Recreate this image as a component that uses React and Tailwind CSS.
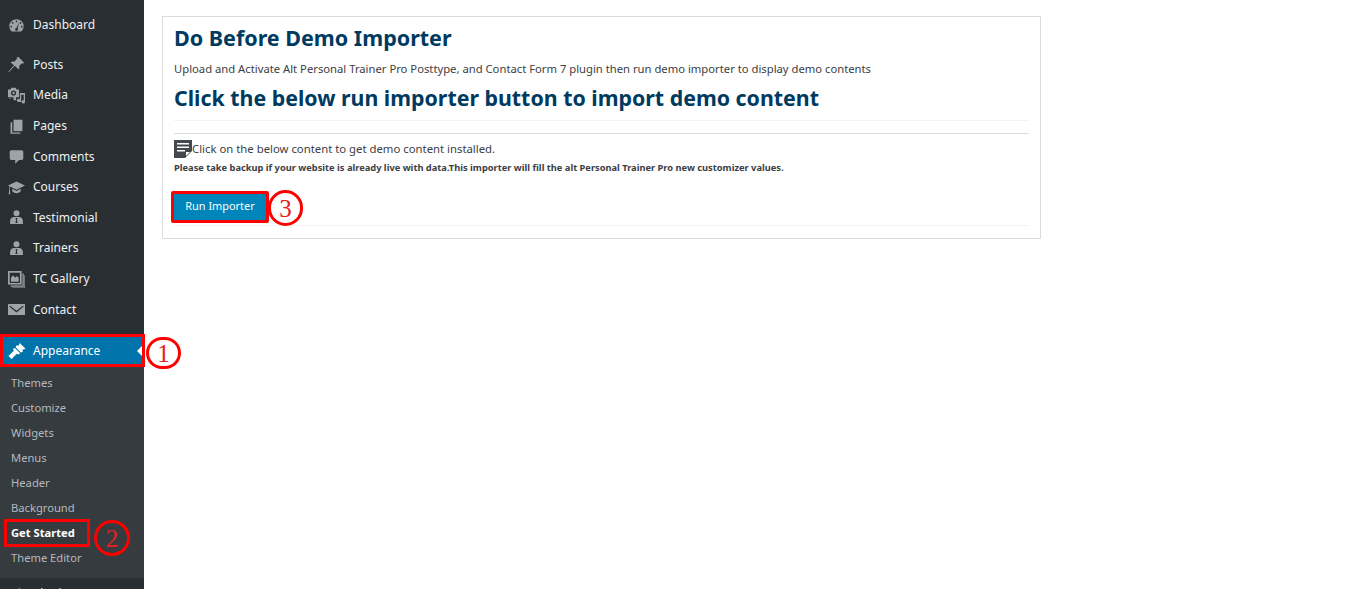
import React from 'react';

const iconClass = 'w-[17px] h-[17px]';

const Gauge = () => (
  <svg viewBox="0 0 20 20" className={iconClass} fill="currentColor">
    <path fillRule="evenodd" d="M10 2.500a8.500 8.500 0 0 0-8.500 8.500c0 2.400 1 4.500 2.700 6h11.600a8.500 8.500 0 0 0 2.700-6 8.500 8.500 0 0 0-8.500-8.500zM10 4.200a1 1 0 1 1 0 2 1 1 0 0 1 0-2zM5.400 6a1 1 0 1 1 0 2 1 1 0 0 1 0-2zM14.600 6a1 1 0 1 1 0 2 1 1 0 0 1 0-2zM3.700 10.400a1 1 0 1 1 0 2 1 1 0 0 1 0-2zM16.300 10.400a1 1 0 1 1 0 2 1 1 0 0 1 0-2zM12.800 6.800l-2.900 6a1.700 1.700 0 1 0 1.500.6z" />
  </svg>
);
const Pin = () => (
  <svg viewBox="0 0 20 20" className={iconClass} fill="currentColor">
    <path d="M12 1l7 7-1.400 1-1-.6-3.400 3.200c.5 1.600.2 3-.7 4.400L8 11.500 1 19l-.5-.5L7 11 3 7.400c1.300-.9 2.800-1.200 4.400-.7l3.200-3.400-.6-1z" />
  </svg>
);
const MediaIcon = () => (
  <svg viewBox="0 0 20 20" className={iconClass} fill="currentColor">
    <path fillRule="evenodd" d="M0 3h3l1-2h5l1 2h3v9H9.500v3.500H6.500V12H0zM6.500 4a3 3 0 1 0 0 6 3 3 0 0 0 0-6z" />
    <circle cx="6.500" cy="7" r="1.400" />
    <path d="M14 7h6v10.500a2 2 0 1 1-1.500-1.900V9h-3v8.500H12a1.800 1.800 0 1 1 2-2zM1 13h3a2.200 2.200 0 0 1-3 0z" />
  </svg>
);
const PagesIcon = () => (
  <svg viewBox="0 0 20 20" className={iconClass} fill="currentColor">
    <path d="M6.500 2H17v13.500H6.500z" />
    <path d="M5 5v12h9.500v1.500H3V5z" />
  </svg>
);
const Bubble = () => (
  <svg viewBox="0 0 20 20" className={iconClass} fill="currentColor">
    <path d="M4 2.500h12a2 2 0 0 1 2 2v7.500a2 2 0 0 1-2 2h-3l-4.500 4.500V14H4a2 2 0 0 1-2-2V4.500a2 2 0 0 1 2-2z" />
  </svg>
);
const Cap = () => (
  <svg viewBox="0 0 20 20" className={iconClass} fill="currentColor">
    <path d="M10 3L0 7.500l1.500.8V13l-.8 5h2L2.300 13V8.800l7.700 3.700 10-5z" />
    <path d="M5 11.500v3c1.300 1.500 3 2.200 5 2.200s3.700-.7 5-2.200v-3l-5 2.500z" />
  </svg>
);
const Person = () => (
  <svg viewBox="0 0 20 20" className={iconClass} fill="currentColor">
    <circle cx="10" cy="5" r="3.500" />
    <path fillRule="evenodd" d="M6.500 9.500h7c2.400.5 4 2 4 4.500v3.500h-15V14c0-2.500 1.600-4 4-4.500zM9.300 10.500l-.5 1 .7 1-.7 4h2.400l-.7-4 .7-1-.5-1z" />
  </svg>
);
const GalleryIcon = () => (
  <svg viewBox="0 0 20 20" className={iconClass} fill="currentColor">
    <path fillRule="evenodd" d="M0 0h16v16H0zM2 2v12h12V2z" />
    <path d="M3.500 12.500V8l2.500-3 2.500 3 2-2 2 2v4.500z" />
    <path d="M17 3h1.500v15.500H3V17h14z" />
    <path d="M19.300 5h.7v15H5v-.7h14.300z" />
  </svg>
);
const Mail = () => (
  <svg viewBox="0 0 20 20" className={iconClass} fill="currentColor">
    <path fillRule="evenodd" d="M0 3.500h20v13H0zM2.500 5.500L10 11.500l7.500-6 1 1L10 13.500 1.500 6.500z" />
  </svg>
);
const Brush = () => (
  <svg viewBox="0 0 20 20" className="w-[18px] h-[18px]" fill="currentColor">
    <path d="M13 1l6.500 6.500-3.500 1 .5 2.200-2.200 1L8.500 5.800l1-2.200 2.200.5z" />
    <path d="M7.700 6.700l5.800 5.800-1.700 1.500-2-1-5.800 6L.5 15.500l6-5.800-1-2z" />
  </svg>
);
const Plug = () => (
  <svg viewBox="0 0 20 20" className={iconClass} fill="currentColor">
    <path d="M13.100 2l1.400 1.400-3 3 2.100 2.100 3-3L18 7l-3 3c1 2-.2 4-2 5l-7-7c1-1.800 3-3 5-2z" />
    <path d="M5 9l6 6-2 1-5 2-2-2 2-5z" />
  </svg>
);
const NoteIcon = () => (
  <svg viewBox="0 0 18 18" className="w-[18px] h-[18px] shrink-0" fill="#44484c">
    <path fillRule="evenodd" d="M0 0h18v11l-7 7H0zM3 3v1.500h12V3zM3 6.500V8h12V6.500zM3 10v1.500h8V10zM12 12v4l4-4z" />
  </svg>
);

const mainItems = [
  { label: 'Posts', icon: Pin },
  { label: 'Media', icon: MediaIcon },
  { label: 'Pages', icon: PagesIcon },
  { label: 'Comments', icon: Bubble },
  { label: 'Courses', icon: Cap },
  { label: 'Testimonial', icon: Person },
  { label: 'Trainers', icon: Person },
  { label: 'TC Gallery', icon: GalleryIcon },
  { label: 'Contact', icon: Mail },
];

const subItems = ['Themes', 'Customize', 'Widgets', 'Menus', 'Header', 'Background'];

const MenuRow = ({ label, icon: Icon }) => (
  <div className="h-[30.6px] flex items-center text-[#eef0f1]">
    <span className="w-[33px] pl-[8px] text-[#9ea3a8]"><Icon /></span>
    <span>{label}</span>
  </div>
);

const Marker = ({ n, className }) => (
  <div className={`absolute rounded-full border-[3px] border-[#ff0000] flex items-center justify-center text-[#e62020] text-[25px] leading-none font-['Liberation_Serif',serif] ${className}`}>
    {n}
  </div>
);

export default function App() {
  return (
    <div className="relative h-[589px] overflow-hidden flex bg-white text-[12px] font-['Noto_Sans',sans-serif]">
      <aside className="relative w-[144px] shrink-0 bg-[#292e33]">
        <div className="pt-[10px] pb-[9px]">
          <MenuRow label="Dashboard" icon={Gauge} />
        </div>
        {mainItems.map((item) => (
          <MenuRow key={item.label} {...item} />
        ))}
        <div className="mt-[9px] h-[33px] pt-[1px] border-[3px] border-[#ff0000] bg-[#0073aa] flex items-center text-white relative w-[145px]">
          <span className="w-[30px] pl-[5px]"><Brush /></span>
          <span>Appearance</span>
          <span className="absolute right-0 top-[9px] w-0 h-0 border-y-[5px] border-y-transparent border-r-[5px] border-r-white"></span>
        </div>
        <div className="bg-[#363b3f] h-[211px] pt-[4px] text-[11.2px] text-[#b4b9be]">
          {subItems.map((s) => (
            <div key={s} className="h-[25px] flex items-center pl-[11px]">{s}</div>
          ))}
          <div className="ml-[4px] w-[86px] h-[28px] -my-[1.500px] border-[3px] border-[#ff0000] flex items-center pl-[4px] text-white font-bold">Get Started</div>
          <div className="h-[25px] flex items-center pl-[11px]">Theme Editor</div>
        </div>
        <div className="pt-[1px]">
          <MenuRow label="Plugins" icon={Plug} />
        </div>
        <Marker n="1" className="left-[146px] top-[337px] w-[35px] h-[32px]" />
        <Marker n="2" className="left-[94px] top-[520px] w-[36px] h-[36px]" />
      </aside>
      <main className="flex-1 pl-[18px] pt-[16px]">
        <div className="relative w-[879px] h-[223px] border border-[#dcdcde] px-[11px] bg-white text-[#3c4043]">
          <h2 className="mt-[5px] text-[21.500px] leading-[32px] font-bold text-[#003a5f]">Do Before Demo Importer</h2>
          <p className="mt-[6px] text-[11.250px] leading-[18px]">Upload and Activate Alt Personal Trainer Pro Posttype, and Contact Form 7 plugin then run demo importer to display demo contents</p>
          <h2 className="mt-[2px] text-[21.350px] leading-[36px] font-bold text-[#003a5f]">Click the below run importer button to import demo content</h2>
          <div className="mt-[4px] border-t border-[#f3f3f3]"></div>
          <div className="mt-[12px] border-t border-[#dcdcde]"></div>
          <div className="mt-[6px] flex items-center text-[11.330px] leading-[18px]">
            <NoteIcon />
            <span>Click on the below content to get demo content installed.</span>
          </div>
          <p className="mt-[2px] text-[9.290px] leading-[16px] font-bold">Please take backup if your website is already live with data.This importer will fill the alt Personal Trainer Pro new customizer values.</p>
          <div className="mt-[15px] -ml-[3px] w-[98px] h-[32px] pb-[1px] rounded-[2px] border-[3px] border-[#ff0000] bg-[#0085ba] flex items-center justify-center text-white text-[10.900px]">Run Importer</div>
          <div className="mt-[2px] border-t border-[#f3f3f3]"></div>
          <Marker n="3" className="left-[105px] top-[173px] w-[35px] h-[36px]" />
        </div>
      </main>
    </div>
  );
}
